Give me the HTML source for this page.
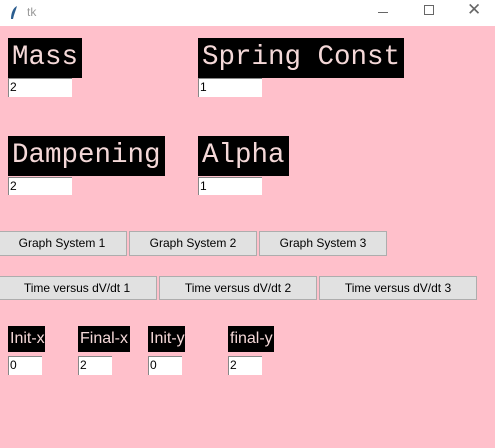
<!DOCTYPE html>
<html><head><meta charset="utf-8"><style>
*{margin:0;padding:0;box-sizing:border-box}
body{width:495px;height:448px;background:#ffc0cb;position:relative;overflow:hidden;font-family:"Liberation Sans",sans-serif}
.tb{position:absolute;left:0;top:0;width:495px;height:26px;background:#fff}
.tb .t{position:absolute;left:27px;top:5px;font-size:12px;color:#999}
.big{position:absolute;background:#000;color:#f4d8d8;font-family:"Liberation Mono",monospace;font-size:27.5px;height:40px;line-height:40px;padding:0 4px;white-space:nowrap}
.sm{position:absolute;background:#000;color:#f4d8d8;font-size:16px;height:26px;line-height:26px;padding:0 2px;white-space:nowrap}
.e{position:absolute;background:#fff;border-top:1px solid #888;border-left:1px solid #888;font-size:12px;line-height:17px;padding-left:1px;color:#000}
.b{position:absolute;background:#e1e1e1;border:1px solid #adadad;font-size:12px;text-align:center;color:#000}
</style></head><body>
<div class="tb"><svg style="position:absolute;left:9px;top:5px" width="10" height="16"><path d="M8 1 C4 3 2 8 2 14 L4 14 C5 9 7 5 8 1Z" fill="#2b5d8f"/></svg><span class="t">tk</span>
<span style="position:absolute;left:378px;top:12px;width:10px;height:1px;background:#666"></span>
<span style="position:absolute;left:424px;top:5px;width:10px;height:10px;border:1px solid #666"></span>
<span style="position:absolute;left:467px;top:0px;font-size:17px;color:#666">✕</span></div>

<div class="big" style="left:8px;top:38px">Mass</div>
<div class="e" style="left:8px;top:78px;width:64px;height:19px">2</div>
<div class="big" style="left:198px;top:38px">Spring Const</div>
<div class="e" style="left:198px;top:78px;width:64px;height:19px">1</div>
<div class="big" style="left:8px;top:136px">Dampening</div>
<div class="e" style="left:8px;top:177px;width:64px;height:18px">2</div>
<div class="big" style="left:198px;top:136px">Alpha</div>
<div class="e" style="left:198px;top:177px;width:64px;height:18px">1</div>

<div class="b" style="left:-3px;top:231px;width:130px;height:25px;line-height:23px">Graph System 1</div>
<div class="b" style="left:129px;top:231px;width:128px;height:25px;line-height:23px">Graph System 2</div>
<div class="b" style="left:259px;top:231px;width:128px;height:25px;line-height:23px">Graph System 3</div>
<div class="b" style="left:-3px;top:276px;width:160px;height:24px;line-height:22px">Time versus dV/dt 1</div>
<div class="b" style="left:159px;top:276px;width:158px;height:24px;line-height:22px">Time versus dV/dt 2</div>
<div class="b" style="left:319px;top:276px;width:158px;height:24px;line-height:22px">Time versus dV/dt 3</div>

<div class="sm" style="left:8px;top:326px;width:37px">Init-x</div>
<div class="sm" style="left:78px;top:326px;width:52px">Final-x</div>
<div class="sm" style="left:148px;top:326px;width:37px">Init-y</div>
<div class="sm" style="left:228px;top:326px;width:46px">final-y</div>
<div class="e" style="left:8px;top:356px;width:34px;height:19px">0</div>
<div class="e" style="left:78px;top:356px;width:34px;height:19px">2</div>
<div class="e" style="left:148px;top:356px;width:34px;height:19px">0</div>
<div class="e" style="left:228px;top:356px;width:34px;height:19px">2</div>
</body></html>
